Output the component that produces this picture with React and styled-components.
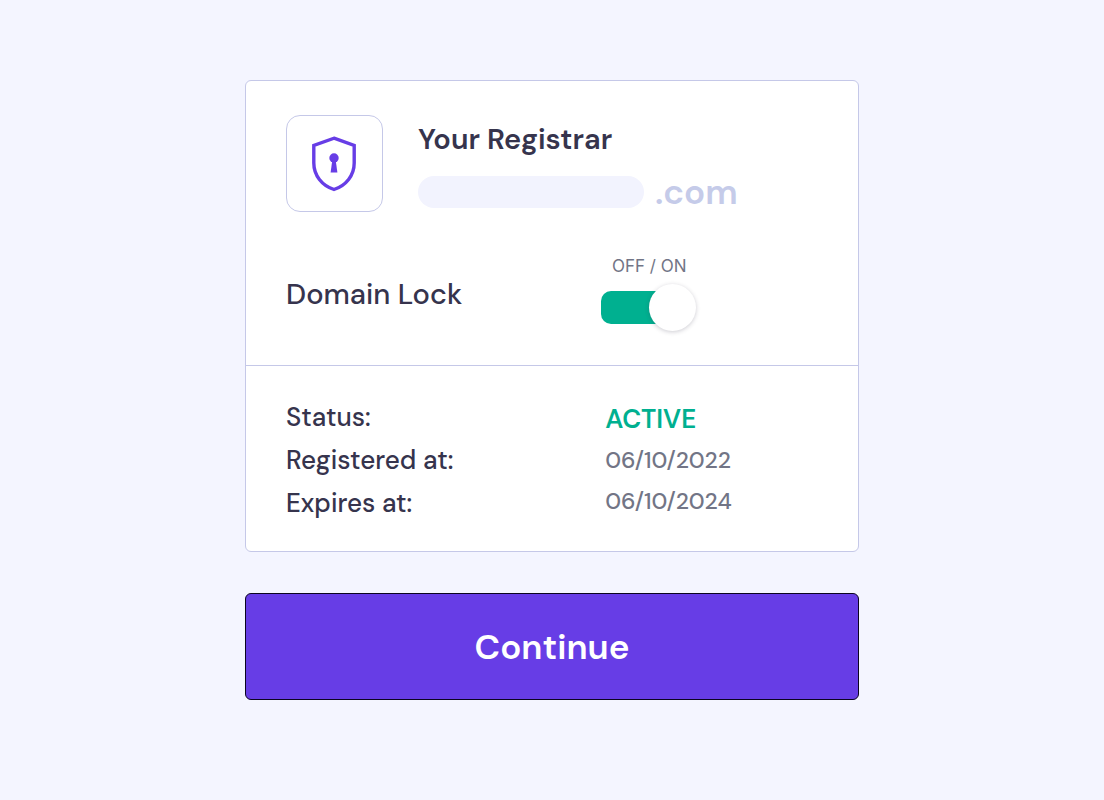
import React, { useState } from "react";
import styled, { createGlobalStyle, ThemeProvider } from "styled-components";

const theme = {
  font: `"DM Sans", Inter, "Liberation Sans", sans-serif`,
  borderRadius: "6px",
  colors: {
    page: "#f4f5ff",
    panel: "#ffffff",
    border: "#c5c8e8",
    text: "#36344d",
    muted: "#727586",
    faded: "#c5cbe9",
    placeholder: "#f2f3fe",
    primary: "#673de6",
    success: "#00b090",
  },
};

const GlobalStyle = createGlobalStyle`
  * {
    box-sizing: border-box;
  }

  body {
    margin: 0;
    background-color: ${(props) => props.theme.colors.page};
    color: ${(props) => props.theme.colors.text};
    font-family: ${(props) => props.theme.font};
  }
`;

const StyledPage = styled.main`
  display: flex;
  flex-direction: column;
  gap: 41px;
  max-width: 662px;
  margin: 0 auto;
  padding: 80px 24px;
`;

const StyledCard = styled.section`
  border: 1px solid ${(props) => props.theme.colors.border};
  border-radius: ${(props) => props.theme.borderRadius};
  background-color: ${(props) => props.theme.colors.panel};
`;

const StyledSettings = styled.div`
  padding: 34px 40px;
  border-bottom: 1px solid ${(props) => props.theme.colors.border};
`;

const StyledRegistrar = styled.div`
  display: flex;
  gap: 35px;
  margin-bottom: 45px;
`;

const StyledIconBox = styled.div`
  display: flex;
  flex-shrink: 0;
  align-items: center;
  justify-content: center;
  width: 97px;
  height: 97px;
  border: 1px solid ${(props) => props.theme.colors.border};
  border-radius: 14px;
  color: ${(props) => props.theme.colors.primary};
`;

const StyledRegistrarText = styled.div`
  flex: 1;
  min-width: 0;
`;

const StyledTitle = styled.h1`
  margin: 7px 0 16px;
  font-size: 29px;
  line-height: 34px;
  font-weight: 600;
`;

const StyledDomain = styled.div`
  display: flex;
  align-items: center;
  gap: 11px;
  height: 40px;
`;

const StyledPlaceholder = styled.div`
  flex: 0 1 226px;
  height: 32px;
  border-radius: 16px;
  background-color: ${(props) => props.theme.colors.placeholder};
`;

const StyledZone = styled.span`
  color: ${(props) => props.theme.colors.faded};
  font-size: 35px;
  line-height: 40px;
  font-weight: 600;
`;

const StyledLockRow = styled.div`
  display: grid;
  grid-template-columns: 16fr 11fr;
  align-items: center;
`;

const StyledLockLabel = styled.label`
  font-size: 29px;
  line-height: 34px;
  font-weight: 500;
`;

const StyledSwitch = styled.label`
  display: flex;
  flex-direction: column;
  align-items: center;
  gap: 9px;
  width: 96px;
  color: ${(props) => props.theme.colors.muted};
  font-family: Inter, "Liberation Sans", sans-serif;
  font-size: 17px;
  line-height: 18px;
  cursor: pointer;
`;

const StyledSwitchInput = styled.input`
  appearance: none;
  display: flex;
  align-items: center;
  position: relative;
  width: 100%;
  height: 47px;
  margin: 0;
  cursor: pointer;

  &:before {
    content: "";
    width: 80px;
    height: 33px;
    border-radius: 10px;
    background-color: ${(props) =>
      props.checked ? props.theme.colors.success : props.theme.colors.faded};
  }

  &:after {
    content: "";
    position: absolute;
    top: 0;
    left: ${(props) => (props.checked ? "48px" : "0")};
    width: 47px;
    height: 47px;
    border-radius: 50%;
    background-color: ${(props) => props.theme.colors.panel};
    box-shadow: 0 1px 4px rgba(54, 52, 77, 0.25);
  }
`;

const StyledDetails = styled.div`
  display: grid;
  grid-template-columns: 3fr 2fr;
  align-items: center;
  padding: 30px 40px 26px;
`;

const StyledList = styled.ul`
  margin: 0;
  padding: 0;
  list-style: none;
`;

const StyledName = styled.li`
  font-size: 26px;
  line-height: 43px;
  font-weight: 500;
`;

const StyledValue = styled.li`
  color: ${(props) =>
    props.$active ? props.theme.colors.success : props.theme.colors.muted};
  font-size: ${(props) => (props.$active ? "26px" : "23px")};
  line-height: 41px;
  font-weight: ${(props) => (props.$active ? 600 : 500)};
`;

const StyledButton = styled.button`
  height: 107px;
  border: 1px solid #0b0420;
  border-radius: ${(props) => props.theme.borderRadius};
  background-color: ${(props) => props.theme.colors.primary};
  color: #ffffff;
  font-family: inherit;
  font-size: 35px;
  line-height: 40px;
  font-weight: 600;
  cursor: pointer;
`;

const details = [
  { name: "Status:", value: "ACTIVE", active: true },
  { name: "Registered at:", value: "06/10/2022" },
  { name: "Expires at:", value: "06/10/2024" },
];

function ShieldIcon() {
  return (
    <svg width="48" height="56" viewBox="0 0 48 56" aria-hidden="true">
      <path
        d="M23 2.2 43.2 9.4V27C43.2 39.5 35 49.5 23 53.5 11 49.5 2.8 39.5 2.8 27V9.4Z"
        fill="none"
        stroke="currentColor"
        strokeWidth="3.4"
      />
      <circle cx="23" cy="22" r="4.7" fill="currentColor" />
      <path d="M21.2 25h3.6l1.6 11.4h-6.8Z" fill="currentColor" />
    </svg>
  );
}

function App() {
  const [locked, setLocked] = useState(true);

  return (
    <ThemeProvider theme={theme}>
      <GlobalStyle />
      <StyledPage>
        <StyledCard>
          <StyledSettings>
            <StyledRegistrar>
              <StyledIconBox>
                <ShieldIcon />
              </StyledIconBox>
              <StyledRegistrarText>
                <StyledTitle>Your Registrar</StyledTitle>
                <StyledDomain>
                  <StyledPlaceholder />
                  <StyledZone>.com</StyledZone>
                </StyledDomain>
              </StyledRegistrarText>
            </StyledRegistrar>
            <StyledLockRow>
              <StyledLockLabel htmlFor="domainLock">Domain Lock</StyledLockLabel>
              <StyledSwitch htmlFor="domainLock">
                OFF / ON
                <StyledSwitchInput
                  type="checkbox"
                  id="domainLock"
                  checked={locked}
                  onChange={() => setLocked(!locked)}
                />
              </StyledSwitch>
            </StyledLockRow>
          </StyledSettings>
          <StyledDetails>
            <StyledList>
              {details.map((item) => (
                <StyledName key={item.name}>{item.name}</StyledName>
              ))}
            </StyledList>
            <StyledList>
              {details.map((item) => (
                <StyledValue key={item.name} $active={item.active}>
                  {item.value}
                </StyledValue>
              ))}
            </StyledList>
          </StyledDetails>
        </StyledCard>
        <StyledButton type="button">Continue</StyledButton>
      </StyledPage>
    </ThemeProvider>
  );
}

export default App;
